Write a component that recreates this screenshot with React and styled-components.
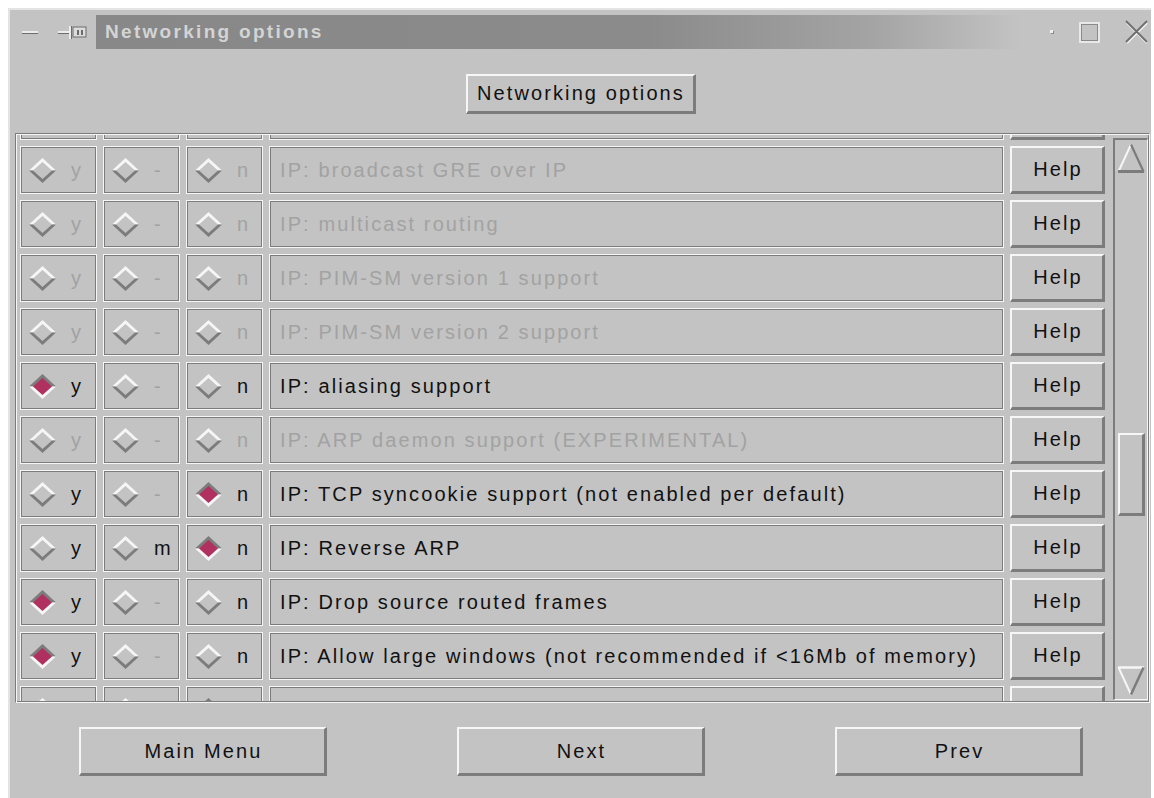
import React from 'react';
import styled, { createGlobalStyle } from 'styled-components';

const BG = '#c3c3c3';
const DARK = '#7c7c7c';
const LIGHT = '#f6f6f6';
const DIM = '#a2a2a2';
const SELECT = '#b03060';

const GlobalStyle = createGlobalStyle`
  html, body { margin: 0; padding: 0; background: #ffffff; }
  body { font-family: "Liberation Sans", Arial, Helvetica, sans-serif; }
`;

const Screen = styled.div`
  width: 1154px;
  height: 798px;
  box-sizing: border-box;
  padding: 8px 0 0 8px;
  overflow: hidden;
`;

const Window = styled.div`
  width: 1143px;
  height: 790px;
  box-sizing: border-box;
  background: ${BG};
  border-top: 2px solid #e4e4e4;
  border-left: 2px solid #e4e4e4;
  display: flex;
  flex-direction: column;
`;

/* ---------- title bar ---------- */

const TitleBar = styled.div`
  margin-top: 5px;
  height: 34px;
  display: flex;
  align-items: stretch;
`;

const TitleControls = styled.div`
  width: ${(p) => p.$w}px;
  box-sizing: border-box;
  padding-left: ${(p) => p.$pad}px;
  display: flex;
  align-items: center;
  gap: ${(p) => p.$gap}px;
`;

const TitleStrip = styled.div`
  flex: 1;
  display: flex;
  align-items: center;
  padding-left: 9px;
  background: linear-gradient(90deg, #888888 0%, #8b8b8b 60%, #a4a4a4 84%, ${BG} 100%);
  font-weight: bold;
  font-size: 19px;
  letter-spacing: 2.3px;
  color: #d4d4d4;
  white-space: nowrap;
`;

const MinimizeGlyph = () => (
  <svg width="16" height="5" viewBox="0 0 16 5">
    <rect x="0" y="1" width="16" height="2" fill="#ececec" />
    <rect x="0" y="3" width="16" height="1" fill="#6c6c6c" />
  </svg>
);

const PinGlyph = () => (
  <svg width="29" height="13" viewBox="0 0 29 13">
    <rect x="0" y="5" width="11" height="2" fill="#ececec" />
    <rect x="0" y="7" width="11" height="1" fill="#6c6c6c" />
    <rect x="11" y="0" width="2" height="13" fill="#ececec" />
    <rect x="13" y="0" width="1" height="13" fill="#6c6c6c" />
    <rect x="15" y="1" width="13" height="10" fill="#dcdcdc" stroke="#6c6c6c" strokeWidth="1" />
    <rect x="19" y="4" width="2" height="5" fill="#6c6c6c" />
    <rect x="23" y="4" width="2" height="5" fill="#6c6c6c" />
  </svg>
);

const DotGlyph = () => (
  <svg width="4" height="4" viewBox="0 0 4 4">
    <rect x="0" y="0" width="3" height="3" fill="#f0f0f0" />
    <rect x="1" y="1" width="3" height="3" fill="#8a8a8a" />
    <rect x="1" y="1" width="2" height="2" fill="#f0f0f0" />
  </svg>
);

const MaximizeGlyph = () => (
  <svg width="21" height="21" viewBox="0 0 21 21">
    <rect x="1" y="1" width="19" height="19" fill="none" stroke="#e8e8e8" strokeWidth="2" />
    <rect x="2.5" y="2.5" width="16" height="16" fill="none" stroke="#8a8a8a" strokeWidth="1" />
  </svg>
);

const CloseGlyph = () => (
  <svg width="24" height="24" viewBox="0 0 24 24">
    <path d="M2 3 L22 23 M22 3 L2 23" stroke="#f0f0f0" strokeWidth="2" />
    <path d="M1 1 L22 22 M22 1 L1 22" stroke="#6e6e6e" strokeWidth="1.8" />
  </svg>
);

/* ---------- buttons ---------- */

const RaisedButton = styled.button`
  width: ${(p) => p.$w}px;
  height: ${(p) => p.$h}px;
  flex: none;
  box-sizing: border-box;
  margin: 0;
  padding: 0 0 0 2px;
  background: ${BG};
  color: #111111;
  font-family: inherit;
  font-size: 20px;
  letter-spacing: 2.1px;
  border-style: solid;
  border-width: 2px 3px 3px 2px;
  border-color: ${LIGHT} ${DARK} ${DARK} ${LIGHT};
  display: flex;
  align-items: center;
  justify-content: center;
  cursor: default;
  white-space: nowrap;
`;

/* ---------- header ---------- */

const Header = styled.div`
  height: 84px;
  box-sizing: border-box;
  padding-top: 25px;
  display: flex;
  justify-content: center;
  align-items: flex-start;
`;

/* ---------- option list ---------- */

const ListFrame = styled.div`
  margin: 0 1px 0 5px;
  height: 570px;
  box-sizing: border-box;
  border: 1px solid;
  border-color: ${DARK} ${LIGHT} ${LIGHT} ${DARK};
  padding: 1px;
  box-shadow: inset 1px 1px 0 ${LIGHT}, inset -1px -1px 0 ${DARK};
  display: flex;
`;

const Viewport = styled.div`
  flex: 1;
  overflow: hidden;
  padding-left: 3px;
`;

const RowList = styled.div`
  margin-top: ${(p) => -p.$offset}px;
  display: flex;
  flex-direction: column;
  gap: 6px;
`;

const Row = styled.div`
  display: flex;
  gap: 6px;
  height: 48px;
  flex: none;
`;

const Cell = styled.div`
  width: ${(p) => p.$w}px;
  height: 48px;
  flex: none;
  box-sizing: border-box;
  border: 1px solid ${LIGHT};
  box-shadow: inset 0 0 0 1px ${DARK};
  display: flex;
  align-items: center;
  padding-left: ${(p) => p.$pad}px;
  gap: 15px;
`;

const Mark = styled.span`
  font-size: 20px;
  color: ${(p) => (p.$dim ? DIM : '#111111')};
`;

const Prompt = styled.span`
  font-size: 20px;
  letter-spacing: 2.1px;
  white-space: nowrap;
  color: ${(p) => (p.$dim ? DIM : '#111111')};
`;

const Diamond = ({ on }) => (
  <svg width="27" height="25" viewBox="0 0 27 25">
    <polygon points="0,12.5 13.5,0 27,12.5" fill={on ? DARK : LIGHT} />
    <polygon points="0,12.5 13.5,25 27,12.5" fill={on ? LIGHT : DARK} />
    <polygon points="4,12.5 13.5,4 23,12.5 13.5,21" fill={on ? SELECT : BG} />
  </svg>
);

/* ---------- scrollbar ---------- */

const ScrollColumn = styled.div`
  width: 38px;
  flex: none;
  box-sizing: border-box;
  padding: 3px 0 1px 3px;
  display: flex;
`;

const Trough = styled.div`
  flex: 1;
  box-sizing: border-box;
  border-style: solid;
  border-width: 2px 1px 1px 2px;
  border-color: ${DARK} ${LIGHT} ${LIGHT} ${DARK};
  padding: 3px 0;
  display: flex;
  flex-direction: column;
  align-items: center;
`;

const Track = styled.div`
  flex: 1;
  width: 100%;
  display: flex;
  flex-direction: column;
  align-items: center;
`;

const Thumb = styled.div`
  width: 27px;
  flex: none;
  box-sizing: border-box;
  border-style: solid;
  border-width: 2px 3px 3px 2px;
  border-color: ${LIGHT} ${DARK} ${DARK} ${LIGHT};
`;

const ArrowUp = () => (
  <svg width="28" height="30" viewBox="0 0 28 30">
    <path d="M1.5 28.5 L14 1.5" stroke={LIGHT} strokeWidth="2" fill="none" />
    <path d="M14 1.5 L26.5 28.5" stroke={DARK} strokeWidth="2.2" fill="none" />
    <path d="M1 28.5 L27 28.5" stroke={DARK} strokeWidth="3" fill="none" />
  </svg>
);

const ArrowDown = () => (
  <svg width="28" height="30" viewBox="0 0 28 30">
    <path d="M1 1.5 L27 1.5" stroke={LIGHT} strokeWidth="2.5" fill="none" />
    <path d="M1.5 1.5 L14 28.5" stroke={LIGHT} strokeWidth="2" fill="none" />
    <path d="M14 28.5 L26.5 1.5" stroke={DARK} strokeWidth="2.5" fill="none" />
  </svg>
);

/* ---------- footer ---------- */

const Footer = styled.div`
  flex: 1;
  box-sizing: border-box;
  padding: 24px 0 0 69px;
  display: flex;
  align-items: flex-start;
  gap: 130px;
`;

/* ---------- data ---------- */

const options = [
  { text: 'IP: GRE tunnels over IP', dim: true },
  { text: 'IP: broadcast GRE over IP', dim: true },
  { text: 'IP: multicast routing', dim: true },
  { text: 'IP: PIM-SM version 1 support', dim: true },
  { text: 'IP: PIM-SM version 2 support', dim: true },
  { text: 'IP: aliasing support', value: 'y', allow: 'yn' },
  { text: 'IP: ARP daemon support (EXPERIMENTAL)', dim: true },
  { text: 'IP: TCP syncookie support (not enabled per default)', value: 'n', allow: 'yn' },
  { text: 'IP: Reverse ARP', value: 'n', allow: 'ymn' },
  { text: 'IP: Drop source routed frames', value: 'y', allow: 'yn' },
  { text: 'IP: Allow large windows (not recommended if <16Mb of memory)', value: 'y', allow: 'yn' },
  { text: 'The IPX protocol', value: 'n', allow: 'ymn' },
];

const choices = [
  { key: 'y', label: 'y' },
  { key: 'm', label: '-' },
  { key: 'n', label: 'n' },
];

// scroll state of the option list (pixels)
const scroll = { content: 3380, view: 566, top: 1783, track: 493 };

export default function App() {
  const thumbHeight = Math.round((scroll.view / scroll.content) * scroll.track);
  const thumbTop = Math.round((scroll.top / scroll.content) * scroll.track);

  return (
    <>
      <GlobalStyle />
      <Screen>
        <Window>
          <TitleBar>
            <TitleControls $w={86} $pad={12} $gap={20}>
              <MinimizeGlyph />
              <PinGlyph />
            </TitleControls>
            <TitleStrip>Networking options</TitleStrip>
            <TitleControls $w={131} $pad={30} $gap={25}>
              <DotGlyph />
              <MaximizeGlyph />
              <CloseGlyph />
            </TitleControls>
          </TitleBar>

          <Header>
            <RaisedButton $w={230} $h={40}>Networking options</RaisedButton>
          </Header>

          <ListFrame>
            <Viewport>
              <RowList $offset={43}>
                {options.map((opt) => (
                  <Row key={opt.text}>
                    {choices.map((c) => {
                      const active = !opt.dim && opt.allow && opt.allow.includes(c.key);
                      return (
                        <Cell key={c.key} $w={77} $pad={8}>
                          <Diamond on={opt.value === c.key} />
                          <Mark $dim={!active}>{c.key === 'm' && active ? 'm' : c.label}</Mark>
                        </Cell>
                      );
                    })}
                    <Cell $w={735} $pad={10}>
                      <Prompt $dim={opt.dim}>{opt.text}</Prompt>
                    </Cell>
                    <RaisedButton $w={95} $h={48}>Help</RaisedButton>
                  </Row>
                ))}
              </RowList>
            </Viewport>
            <ScrollColumn>
              <Trough>
                <ArrowUp />
                <Track>
                  <Thumb style={{ marginTop: thumbTop, height: thumbHeight }} />
                </Track>
                <ArrowDown />
              </Trough>
            </ScrollColumn>
          </ListFrame>

          <Footer>
            <RaisedButton $w={248} $h={49}>Main Menu</RaisedButton>
            <RaisedButton $w={248} $h={49}>Next</RaisedButton>
            <RaisedButton $w={248} $h={49}>Prev</RaisedButton>
          </Footer>
        </Window>
      </Screen>
    </>
  );
}
